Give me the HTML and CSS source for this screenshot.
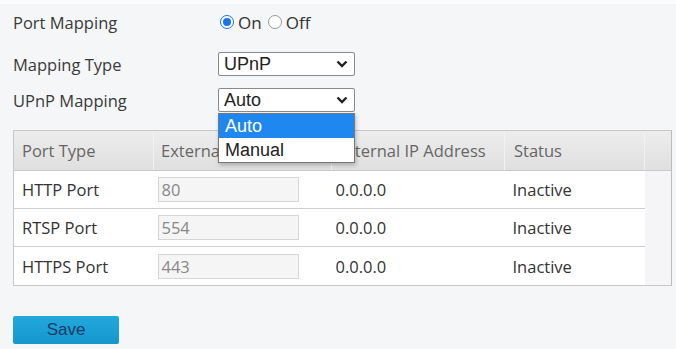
FILE: index.html
```html
<!DOCTYPE html>
<html lang="en">
<head>
    <meta charset="UTF-8">
    <title>Port Mapping</title>
    <link rel="stylesheet" href="styles.css">
</head>
<body>
    <div class="page">
        <div class="field first">
            <div class="label">Port Mapping</div>
            <div class="radios">
                <span class="radio checked"></span><span class="opt">On</span>
                <span class="radio"></span><span class="opt">Off</span>
            </div>
        </div>
        <div class="field second">
            <div class="label">Mapping Type</div>
            <div class="select">
                <span>UPnP</span>
                <svg width="12" height="8" viewBox="0 0 12 8"><path d="M1.5 1.5 L6 6 L10.5 1.5" fill="none" stroke="#222" stroke-width="2.4"/></svg>
            </div>
        </div>
        <div class="field third">
            <div class="label">UPnP Mapping</div>
            <div class="select-wrap">
                <div class="select">
                    <span>Auto</span>
                    <svg width="12" height="8" viewBox="0 0 12 8"><path d="M1.5 1.5 L6 6 L10.5 1.5" fill="none" stroke="#222" stroke-width="2.4"/></svg>
                </div>
                <ul class="dropdown">
                    <li class="active">Auto</li>
                    <li>Manual</li>
                </ul>
            </div>
        </div>

        <div class="grid">
            <table>
                <thead>
                    <tr>
                        <th class="c1">Port Type</th>
                        <th class="c2">External Port</th>
                        <th class="c3">External IP Address</th>
                        <th class="c4">Status</th>
                        <th class="fill"></th>
                    </tr>
                </thead>
                <tbody>
                    <tr>
                        <td>HTTP Port</td>
                        <td><div class="input">80</div></td>
                        <td>0.0.0.0</td>
                        <td>Inactive</td>
                        <td class="fill"></td>
                    </tr>
                    <tr>
                        <td>RTSP Port</td>
                        <td><div class="input">554</div></td>
                        <td>0.0.0.0</td>
                        <td>Inactive</td>
                        <td class="fill"></td>
                    </tr>
                    <tr class="last">
                        <td>HTTPS Port</td>
                        <td><div class="input">443</div></td>
                        <td>0.0.0.0</td>
                        <td>Inactive</td>
                        <td class="fill"></td>
                    </tr>
                </tbody>
            </table>
        </div>

        <button class="save">Save</button>
    </div>
</body>
</html>
```

FILE: styles.css
```css
body {
    margin: 0;
    background: #f4f6f8;
    font-family: 'Open Sans', 'Noto Sans', sans-serif;
    font-size: 16px;
    color: #333;
}

.page {
    border-top: 4px solid #fbfcfd;
    padding: 0 6px 0 13px;
}

.field {
    display: flex;
    align-items: center;
    height: 24px;
    margin-top: 12px;
}

.field.first {
    margin-top: 6px;
}

.field.second {
    margin-top: 18px;
}

.label {
    width: 205px;
    font-size: 16.5px;
    color: #3a3a3a;
}

/* radio group */
.radios {
    display: flex;
    align-items: center;
    margin-left: 2px;
}

.radio {
    width: 14px;
    height: 14px;
    border: 1px solid #999;
    border-radius: 50%;
    background: #fff;
    box-sizing: border-box;
    margin-right: 4px;
    position: relative;
}

.radio.checked {
    border-color: #1a73e8;
}

.radio.checked::after {
    content: '';
    position: absolute;
    left: 2px;
    top: 2px;
    width: 8px;
    height: 8px;
    border-radius: 50%;
    background: #1a73e8;
}

.opt {
    margin-right: 6px;
    font-size: 17px;
    color: #333;
}

/* select boxes */
.select {
    width: 137px;
    height: 24px;
    box-sizing: border-box;
    border: 1px solid #8a8a8a;
    border-radius: 2px;
    background: #fff;
    display: flex;
    align-items: center;
    justify-content: space-between;
    padding: 0 6px 0 5px;
    font-family: 'Liberation Sans', Arial, sans-serif;
    font-size: 18px;
    color: #222;
}

.select-wrap {
    position: relative;
}

.dropdown {
    position: absolute;
    left: 0;
    top: 25px;
    width: 135px;
    margin: 0;
    padding: 0;
    list-style: none;
    background: #fff;
    border: 1px solid #777;
    box-shadow: 1px 2px 4px rgba(0,0,0,0.25);
    z-index: 5;
    font-family: 'Liberation Sans', Arial, sans-serif;
    font-size: 18px;
    color: #222;
}

.dropdown li {
    height: 24px;
    line-height: 24px;
    padding-left: 6px;
}

.dropdown li.active {
    background: #1e88f0;
    color: #fff;
}

/* table */
.grid {
    margin-top: 18px;
    width: 657px;
    border: 1px solid #c8c8c8;
    border-right-color: #bbb;
    background: #f5f5f7;
}

table {
    width: 100%;
    border-collapse: collapse;
    table-layout: fixed;
}

th {
    height: 39px;
    text-align: left;
    font-weight: normal;
    font-size: 16.5px;
    color: #666;
    padding: 0 0 0 8px;
    background: linear-gradient(#ededed, #dfdfdf);
    border-right: 1px solid #f2f2f2;
    border-bottom: 1px solid #c9c9c9;
    white-space: nowrap;
    overflow: hidden;
}

th.c1 { width: 131px; }
th.c2 { width: 170px; padding-left: 7px; }
th.c3 { width: 167px; padding-left: 5px; }
th.c4 { width: 130px; padding-left: 9px; }
th.fill { padding: 0; border-right: none; }

td {
    height: 37px;
    background: #fff;
    border-bottom: 1px solid #cfcfcf;
    padding: 0 0 0 8px;
    color: #333;
    font-size: 16.5px;
}

td:nth-child(2) { padding-left: 4px; }
td:nth-child(3) { padding-left: 4px; }
td:nth-child(4) { padding-left: 8px; }

tr.last td {
    height: 38px;
    border-bottom: none;
}

td.fill {
    background: #f5f5f7;
    border-bottom: none;
    padding: 0;
}

.input {
    width: 141px;
    height: 25px;
    box-sizing: border-box;
    border: 1px solid #d6d6d6;
    background: #f5f5f5;
    color: #888;
    line-height: 23px;
    padding-left: 3px;
    font-size: 16.5px;
}

/* button */
.save {
    margin-top: 30px;
    width: 106px;
    height: 28px;
    border: none;
    border-radius: 2px;
    background: linear-gradient(#23a9de, #1596cc);
    color: #1d3b66;
    font-family: 'Liberation Sans', Arial, sans-serif;
    font-size: 17px;
    cursor: pointer;
}
```
